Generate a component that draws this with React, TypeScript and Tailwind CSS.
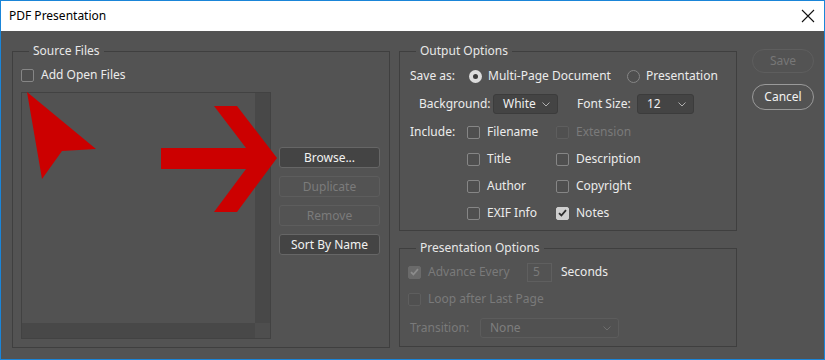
import type { ReactNode } from 'react';

const text = "font-['Noto_Sans',sans-serif] text-[12px] leading-[16px]";

function Check({ checked = false, disabled = false }: { checked?: boolean; disabled?: boolean }) {
  const box = disabled
    ? checked
      ? 'border-[#6a6a6a] bg-[#6a6a6a]'
      : 'border-[#5e5e5e] bg-[#505050]'
    : checked
      ? 'border-[#cfcfcf] bg-[#cfcfcf]'
      : 'border-[#868686] bg-[#4f4f4f]';
  return (
    <span className={`flex h-[13px] w-[13px] shrink-0 items-center justify-center rounded-[2px] border ${box}`}>
      {checked ? (
        <svg width="9" height="8" viewBox="0 0 9 8">
          <path d="M1 4.2 L3.4 6.5 L8 1.2" fill="none" stroke={disabled ? '#8c8c8c' : '#2e2e2e'} strokeWidth="1.8" />
        </svg>
      ) : null}
    </span>
  );
}

function Radio({ checked = false }: { checked?: boolean }) {
  return checked ? (
    <span className="flex h-[13px] w-[13px] shrink-0 items-center justify-center rounded-full bg-[#dcdcdc]">
      <span className="h-[5px] w-[5px] rounded-full bg-[#3a3a3a]" />
    </span>
  ) : (
    <span className="h-[13px] w-[13px] shrink-0 rounded-full border border-[#868686] bg-[#4f4f4f]" />
  );
}

function Chevron({ color }: { color: string }) {
  return (
    <svg width="8" height="5" viewBox="0 0 8 5" className="shrink-0">
      <path d="M0.5 0.5 L4 4 L7.5 0.5" fill="none" stroke={color} strokeWidth="1" />
    </svg>
  );
}

function Select({ value, width, disabled = false }: { value: string; width: string; disabled?: boolean }) {
  return (
    <div
      className={`flex h-[20px] items-center justify-between rounded-[3px] border pl-[9px] pr-[7px] ${width} ${
        disabled ? 'border-[#5c5c5c] bg-[#515151] text-[#7e7e7e]' : 'border-[#3c3c3c] bg-[#444444] text-[#f0f0f0]'
      }`}
    >
      <span>{value}</span>
      <Chevron color={disabled ? '#6e6e6e' : '#b0b0b0'} />
    </div>
  );
}

function Btn({ label, disabled = false }: { label: string; disabled?: boolean }) {
  return (
    <div
      className={`flex h-[21px] w-[101px] items-center justify-center rounded-[3px] border ${
        disabled ? 'border-[#5d5d5d] bg-[#535353] text-[#7b7b7b]' : 'border-[#666666] bg-[#444444] text-[#f2f2f2]'
      }`}
    >
      {label}
    </div>
  );
}

function Group({ title, className, children }: { title: string; className: string; children: ReactNode }) {
  return (
    <fieldset className={`m-0 border border-[#3f3f3f] p-0 ${className}`}>
      <legend className="ml-[16px] px-[4px] text-[#e8e8e8]">{title}</legend>
      {children}
    </fieldset>
  );
}

function Option({ label, checked, disabled }: { label: string; checked?: boolean; disabled?: boolean }) {
  return (
    <div className="flex h-[20px] items-center gap-[7px]">
      <Check checked={checked} disabled={disabled} />
      <span className={disabled ? 'text-[#7a7a7a]' : 'text-[#ececec]'}>{label}</span>
    </div>
  );
}

export default function App() {
  return (
    <div className={`relative flex h-[360px] w-[825px] flex-col border border-[#1a85d8] bg-[#535353] ${text}`}>
      <div className="flex h-[30px] shrink-0 items-center justify-between bg-white pl-[8px] pr-[9px] text-[#000000]">
        <span>PDF Presentation</span>
        <svg width="14" height="14" viewBox="0 0 14 14">
          <path d="M1 1 L13 13 M13 1 L1 13" stroke="#111111" strokeWidth="1.1" />
        </svg>
      </div>

      <div className="flex flex-1 pl-[11px] pt-[12px] text-[#ececec]">
        <Group title="Source Files" className="h-[305px] w-[378px]">
          <div className="pl-[8px]">
            <div className="mt-[8px] flex h-[16px] items-center gap-[7px]">
              <Check />
              <span>Add Open Files</span>
            </div>
            <div className="mt-[9px] flex gap-[8px]">
              <div className="grid h-[247px] w-[250px] grid-cols-[1fr_15px] grid-rows-[1fr_15px] border border-[#424242] bg-[#525252]">
                <div />
                <div className="bg-[#484848]" />
                <div className="bg-[#484848]" />
                <div className="bg-[#4e4e4e]" />
              </div>
              <div className="mt-[55px] flex flex-col gap-[8px]">
                <Btn label="Browse..." />
                <Btn label="Duplicate" disabled />
                <Btn label="Remove" disabled />
                <Btn label="Sort By Name" />
              </div>
            </div>
          </div>
        </Group>

        <div className="ml-[9px] flex flex-col gap-[9px]">
          <Group title="Output Options" className="h-[188px] w-[338px]">
            <div className="pl-[10px]">
              <div className="mt-[7px] flex h-[20px] items-center">
                <span className="w-[59px]">Save as:</span>
                <Radio checked />
                <span className="ml-[6px] w-[139px]">Multi-Page Document</span>
                <Radio />
                <span className="ml-[6px]">Presentation</span>
              </div>
              <div className="mt-[8px] flex h-[20px] items-center pl-[9px]">
                <span className="w-[74px]">Background:</span>
                <Select value="White" width="w-[65px]" />
                <span className="ml-[19px] w-[60px]">Font Size:</span>
                <Select value="12" width="w-[57px]" />
              </div>
              <div className="mt-[8px] grid grid-cols-[57px_89px_1fr] gap-y-[7px]">
                <span className="flex h-[20px] items-center">Include:</span>
                <Option label="Filename" />
                <Option label="Extension" disabled />
                <span />
                <Option label="Title" />
                <Option label="Description" />
                <span />
                <Option label="Author" />
                <Option label="Copyright" />
                <span />
                <Option label="EXIF Info" />
                <Option label="Notes" checked />
              </div>
            </div>
          </Group>

          <Group title="Presentation Options" className="h-[107px] w-[338px]">
            <div className="pl-[8px]">
              <div className="mt-[6px] flex h-[20px] items-center">
                <Check checked disabled />
                <span className="ml-[7px] w-[99px] text-[#7a7a7a]">Advance Every</span>
                <div className="flex h-[19px] w-[25px] items-center border border-[#5f5f5f] pl-[5px] text-[#7a7a7a]">5</div>
                <span className="ml-[9px]">Seconds</span>
              </div>
              <div className="mt-[7px] flex h-[20px] items-center">
                <Check disabled />
                <span className="ml-[7px] text-[#7a7a7a]">Loop after Last Page</span>
              </div>
              <div className="mt-[9px] flex h-[20px] items-center pl-[2px]">
                <span className="w-[70px] text-[#7a7a7a]">Transition:</span>
                <Select value="None" width="w-[139px]" disabled />
              </div>
            </div>
          </Group>
        </div>

        <div className="ml-[15px] mt-[6px] flex flex-col gap-[11px]">
          <div className="flex h-[24px] w-[62px] items-center justify-center rounded-full border border-[#5e5e5e] text-[#777777]">
            Save
          </div>
          <div className="flex h-[26px] w-[62px] items-center justify-center rounded-full border border-[#9a9a9a] text-[#f2f2f2]">
            Cancel
          </div>
        </div>
      </div>

      <svg className="pointer-events-none absolute -left-px -top-px" width="825" height="360" viewBox="0 0 825 360">
        <polygon points="27,92 96,149 62,151 42,179" fill="#cc0000" />
        <polygon points="161,148 246,148 214,106 237,106 277,158 237,212 214,212 246,169 161,169" fill="#cc0000" />
      </svg>
    </div>
  );
}
